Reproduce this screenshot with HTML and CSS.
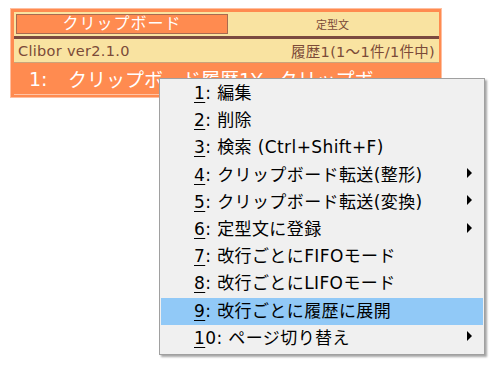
FILE: index.html
```html
<!DOCTYPE html>
<html lang="ja">
<head>
    <meta charset="UTF-8">
    <title>Clibor</title>
    <link rel="stylesheet" href="styles.css">
</head>
<body>
    <div class="window">
        <div class="tabs">
            <div class="tab active">クリップボード</div>
            <div class="tab">定型文</div>
        </div>
        <div class="status">
            <span>Clibor ver2.1.0</span>
            <span>履歴1(1～1件/1件中)</span>
        </div>
        <div class="list">
            <div class="row"><span class="num">1:</span><span>クリップボード履歴1Y~クリップボ</span></div>
        </div>
    </div>

    <div class="menu">
        <div class="item"><span><u>1</u>: 編集</span></div>
        <div class="item"><span><u>2</u>: 削除</span></div>
        <div class="item"><span><u>3</u>: 検索 (Ctrl+Shift+F)</span></div>
        <div class="item"><span><u>4</u>: クリップボード転送(整形)</span><i class="arrow"></i></div>
        <div class="item"><span><u>5</u>: クリップボード転送(変換)</span><i class="arrow"></i></div>
        <div class="item"><span><u>6</u>: 定型文に登録</span><i class="arrow"></i></div>
        <div class="item"><span><u>7</u>: 改行ごとにFIFOモード</span></div>
        <div class="item"><span><u>8</u>: 改行ごとにLIFOモード</span></div>
        <div class="item selected"><span><u>9</u>: 改行ごとに履歴に展開</span></div>
        <div class="item"><span><u>1</u>0: ページ切り替え</span><i class="arrow"></i></div>
    </div>
</body>
</html>
```

FILE: styles.css
```css
body {
    margin: 0;
    background-color: white;
    font-family: "DejaVu Sans", "Noto Sans CJK JP", sans-serif;
    position: relative;
    width: 500px;
    height: 370px;
    overflow: hidden;
}
.window {
    margin: 8px 0 0 10px;
    width: 432px;
    height: 90px;
    box-sizing: border-box;
    background-color: #ff8b50;
    border: 1px solid #ffbfa0;
    padding: 3px 2px 0 3px;
}
.tabs {
    display: flex;
    align-items: center;
    height: 24px;
    background-color: #f9e3a1;
    padding: 0 2px;
}
.tab {
    flex: 1;
    text-align: center;
    font-size: 11px;
    color: #7b4a38;
}
.tab.active {
    flex: 0 0 212px;
    box-sizing: border-box;
    height: 20px;
    line-height: 18px;
    background-color: #ff8b50;
    border: 1px solid #a86a50;
    color: white;
    font-size: 16px;
    letter-spacing: 1px;
}
.status {
    display: flex;
    justify-content: space-between;
    align-items: center;
    height: 23px;
    background-color: #f9e3a1;
    border-top: 3px solid #7b4a40;
    border-bottom: 1px solid #c9a47a;
    padding: 0 4px;
    font-size: 14.5px;
    letter-spacing: 0.3px;
    color: #7b4a38;
}
.list {
    border-bottom: 1px solid #ffc4a6;
}
.row {
    display: flex;
    height: 31px;
    align-items: center;
    color: white;
    font-size: 19px;
    padding-left: 15px;
}
.num {
    width: 39px;
}
.menu {
    position: absolute;
    left: 159px;
    top: 78px;
    width: 326px;
    box-sizing: border-box;
    background-color: #f0f0f0;
    border: 1px solid #a0a0a0;
    padding: 1px 1px 2px;
    box-shadow: 2px 2px 2px rgba(0, 0, 0, 0.35);
}
.item {
    display: flex;
    align-items: center;
    height: 27.2px;
    box-sizing: border-box;
    padding: 0 11px 4px 33px;
    font-size: 17px;
    letter-spacing: 0.4px;
    color: #000;
}
.item u {
    text-underline-offset: 3px;
}
.item.selected {
    background-color: #91c9f7;
}
.arrow {
    margin-left: auto;
    width: 0;
    height: 0;
    border-left: 5px solid #000;
    border-top: 5px solid transparent;
    border-bottom: 5px solid transparent;
}
```
